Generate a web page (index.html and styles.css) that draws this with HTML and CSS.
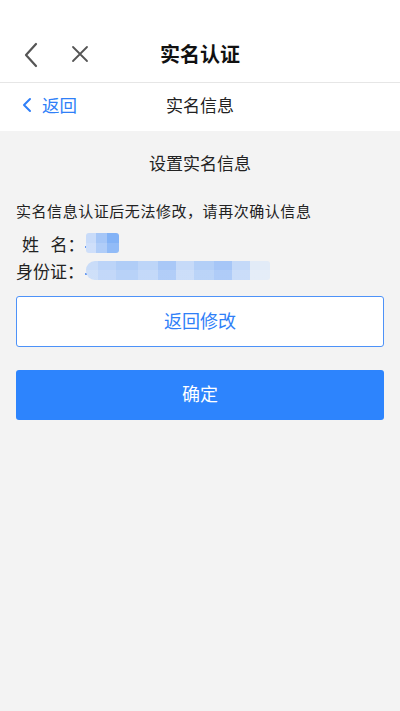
FILE: index.html
```html
<!DOCTYPE html>
<html lang="zh">
<head>
<meta charset="utf-8">
<link rel="stylesheet" href="styles.css">
</head>
<body>
<div class="page">
  <header class="topbar">
    <svg class="icon-back" width="16" height="26" viewBox="0 0 16 26"><path d="M13 2 L3 13 L13 24" fill="none" stroke="#555" stroke-width="2.2" stroke-linecap="round" stroke-linejoin="round"/></svg>
    <svg class="icon-close" width="18" height="18" viewBox="0 0 18 18"><path d="M2 2 L16 16 M16 2 L2 16" fill="none" stroke="#555" stroke-width="1.8" stroke-linecap="round"/></svg>
    <h1 class="title">实名认证</h1>
  </header>
  <nav class="subbar">
    <span class="back-link">
      <svg width="10" height="16" viewBox="0 0 10 16"><path d="M8 2 L2 8 L8 14" fill="none" stroke="#2f7ff8" stroke-width="2" stroke-linecap="round" stroke-linejoin="round"/></svg>
      <span class="back-text">返回</span>
    </span>
    <span class="subtitle">实名信息</span>
  </nav>
  <main class="content">
    <h2 class="section-title">设置实名信息</h2>
    <p class="notice">实名信息认证后无法修改，请再次确认信息</p>
    <div class="info-row name-row"><span class="label">姓&nbsp;&nbsp;&nbsp;名：</span><span class="dot"></span><span class="blur blur-name"></span></div>
    <div class="info-row id-row"><span class="label">身份证：</span><span class="dot"></span><span class="blur blur-id"></span></div>
    <button class="btn btn-outline">返回修改</button>
    <button class="btn btn-primary">确定</button>
  </main>
</div>
</body>
</html>
```

FILE: styles.css
```css
* { box-sizing: border-box; }
html, body { margin: 0; padding: 0; }
body {
  font-family: "Noto Sans CJK SC", "Noto Sans", sans-serif;
  background: #f3f3f3;
  color: #222;
}
.page { width: 400px; min-height: 711px; background: #f3f3f3; }
.topbar {
  position: relative;
  height: 83px;
  background: #fff;
  border-bottom: 1px solid #e6e6e6;
  display: flex;
  align-items: center;
  justify-content: center;
  padding-top: 25px;
}
.icon-back { position: absolute; left: 23px; top: 42px; }
.icon-close { position: absolute; left: 71px; top: 45px; }
.title {
  margin: 0;
  font-size: 20px;
  font-weight: 700;
  color: #111;
  line-height: 1;
}
.subbar {
  position: relative;
  height: 48px;
  background: #fff;
  display: flex;
  align-items: center;
  justify-content: center;
  padding-bottom: 5px;
}
.back-link {
  position: absolute;
  left: 22px;
  top: 0;
  height: 43px;
  display: flex;
  align-items: center;
  gap: 10px;
  color: #2f7ff8;
  font-size: 17.5px;
}
.back-link svg { margin-top: 1px; }
.subtitle { font-size: 17px; color: #222; }
.content { padding: 0 16px; }
.section-title {
  margin: 0;
  padding-top: 20px;
  height: 65px;
  font-size: 17px;
  font-weight: 400;
  text-align: center;
  color: #222;
  line-height: 24px;
}
.notice {
  margin: 0;
  font-size: 15px;
  letter-spacing: 0.55px;
  line-height: 30px;
  color: #222;
  height: 30px;
}
.info-row {
  display: flex;
  align-items: center;
  font-size: 17px;
  color: #222;
}
.name-row { padding-left: 6px; height: 34px; }
.id-row { height: 20px; }
.label { display: inline-block; }
.dot {
  display: inline-block;
  width: 2px;
  height: 2px;
  border-radius: 1px;
  background: #3d7ef0;
  align-self: center;
  margin-top: 8px;
  margin-left: 1px;
}
.blur {
  display: inline-block;
  border-radius: 3px;
}
.blur-name {
  width: 33px;
  height: 20px;
  margin-left: -1px;
  background:
    linear-gradient(180deg, rgba(255,255,255,0) 0 50%, rgba(255,255,255,0.12) 50% 100%),
    linear-gradient(90deg, #c8dbf9 0 10px, #a5c6f7 10px 21px, #82b2f6 21px 100%);
}
.blur-id {
  width: 184px;
  height: 19px;
  margin-left: -1px;
  border-radius: 9px 3px 3px 9px;
  background:
    linear-gradient(180deg, rgba(255,255,255,0) 0 50%, rgba(255,255,255,0.1) 50% 100%),
    linear-gradient(90deg, #c9dcf8 0 12px, #bcd4f8 12px 30px, #b0cdf7 30px 52px, #bdd5f8 52px 72px, #a9c8f7 72px 90px, #c6daf8 90px 108px, #b3cff7 108px 128px, #a6c6f7 128px 146px, #c4d9f8 146px 164px, #e2ebf7 164px 184px);
}
.btn {
  display: block;
  width: 368px;
  height: 51px;
  border-radius: 3px;
  font-family: "Noto Sans CJK SC", "Noto Sans", sans-serif;
  font-size: 18px;
  padding: 0 0 4px;
  cursor: pointer;
}
.btn-outline {
  margin-top: 16px;
  background: #fff;
  border: 1.5px solid #4d92f8;
  color: #2f7ff8;
}
.btn-primary {
  margin-top: 23px;
  background: #2d84fd;
  border: none;
  color: #fff;
  height: 50px;
}
```
